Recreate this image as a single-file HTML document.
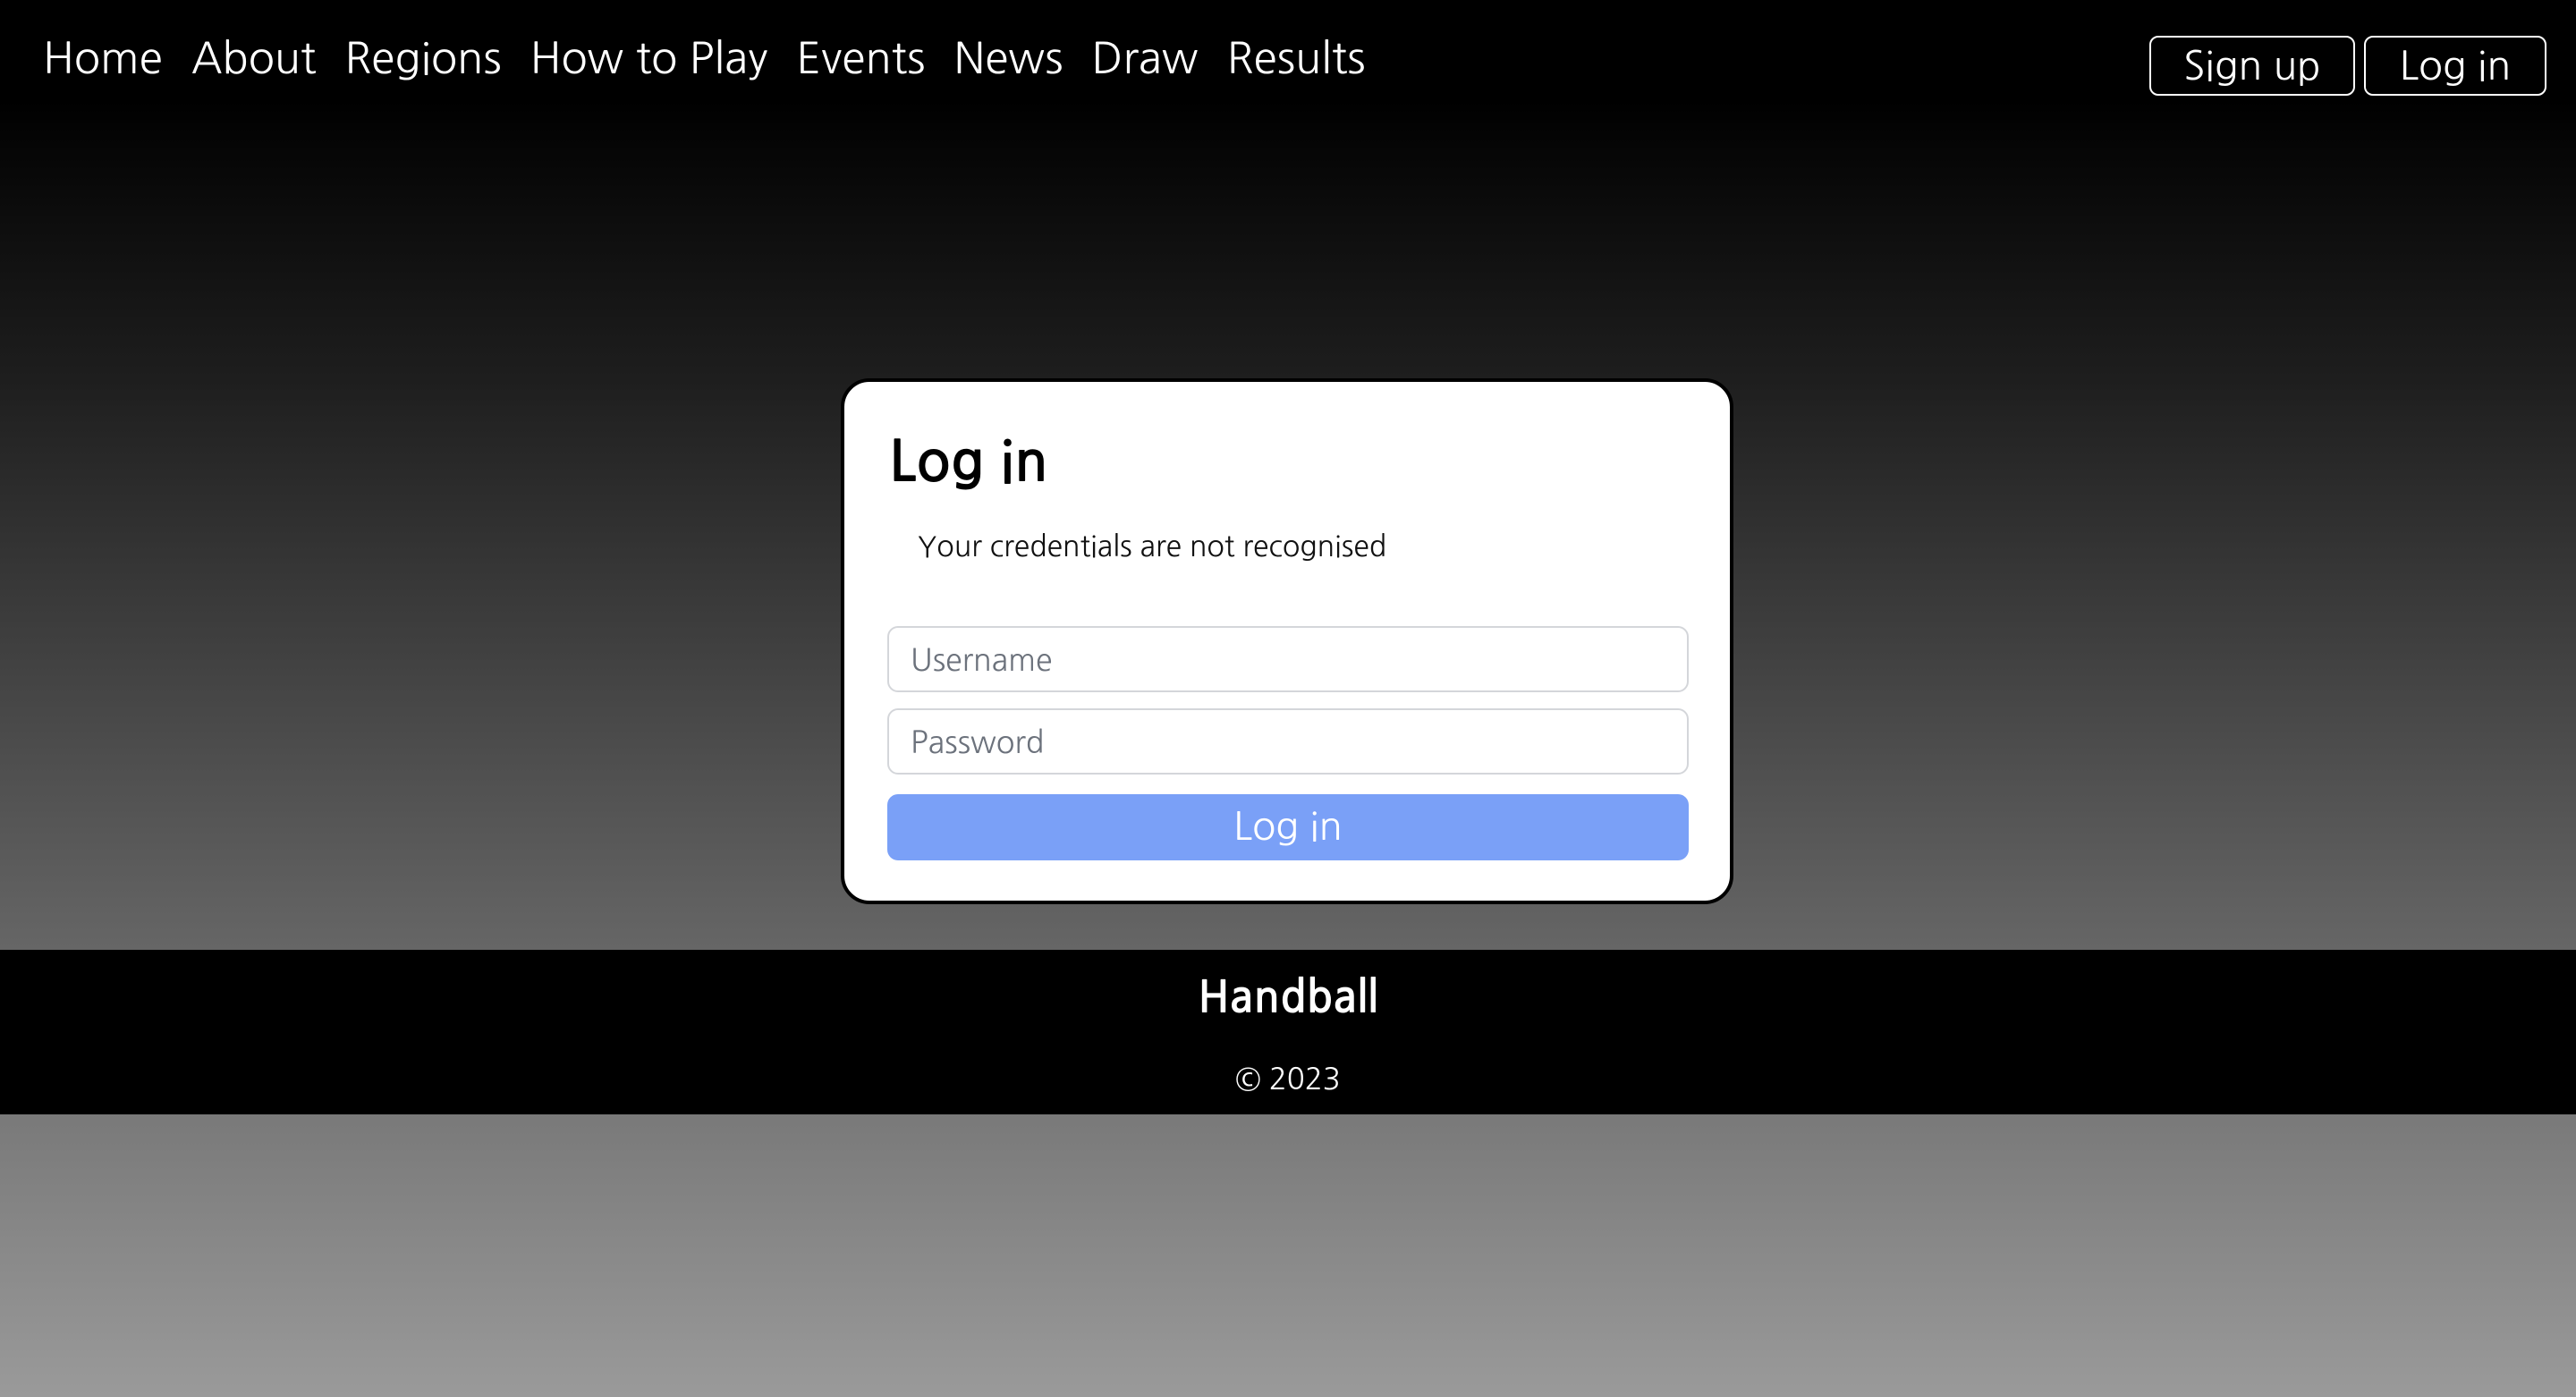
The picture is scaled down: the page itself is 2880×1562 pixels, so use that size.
<!DOCTYPE html>
<html><head><meta charset="utf-8"><style>
*{margin:0;padding:0;box-sizing:border-box}
html,body{width:2880px;height:1562px;overflow:hidden}
body{font-family:"NanumGothic","Liberation Sans",sans-serif;background:linear-gradient(to bottom,#000 0px,#000 110px,#1e1e1e 424px,#666 1062px,#9a9a9a 1562px);position:relative;color:#fff}
.nav{position:absolute;top:35px;left:48px;font-size:48px;white-space:nowrap;line-height:60px}
.nav span{margin-right:32px}
.btn{position:absolute;top:40px;height:67px;border:2px solid #fff;border-radius:10px;font-size:44px;line-height:64px;text-align:center;color:#fff}
.card{position:absolute;left:940px;top:423px;width:998px;height:588px;background:#fff;border:4px solid #000;border-radius:32px;color:#000}
.card h1{position:absolute;left:50px;top:50px;font-size:63px;font-weight:bold;line-height:80px}
.msg{position:absolute;left:82px;top:160px;font-size:32px;line-height:48px;color:#111}
.inp{position:absolute;left:48px;width:896px;height:74px;border:2px solid #d4d6da;border-radius:12px;font-size:34px;line-height:72px;padding-left:24px;color:#6c727c}
.sub{position:absolute;left:48px;top:461px;width:896px;height:74px;background:#7aa0f7;border-radius:12px;color:#fff;font-size:43px;line-height:74px;text-align:center}
.foot{position:absolute;left:0;top:1062px;width:2880px;height:184px;background:#000;text-align:center}
.foot .h{position:absolute;top:22px;width:100%;font-size:49px;font-weight:bold;line-height:64px}
.foot .c{position:absolute;top:123px;width:100%;font-size:33px;line-height:44px}
</style></head><body>
<div class="nav"><span>Home</span><span>About</span><span>Regions</span><span>How to Play</span><span>Events</span><span>News</span><span>Draw</span><span>Results</span></div>
<div class="btn" style="left:2403px;width:230px">Sign up</div>
<div class="btn" style="left:2643px;width:204px">Log in</div>
<div class="card">
<h1>Log in</h1>
<div class="msg">Your credentials are not recognised</div>
<div class="inp" style="top:273px">Username</div>
<div class="inp" style="top:365px">Password</div>
<div class="sub">Log in</div>
</div>
<div class="foot"><div class="h">Handball</div><div class="c">© 2023</div></div>
</body></html>
